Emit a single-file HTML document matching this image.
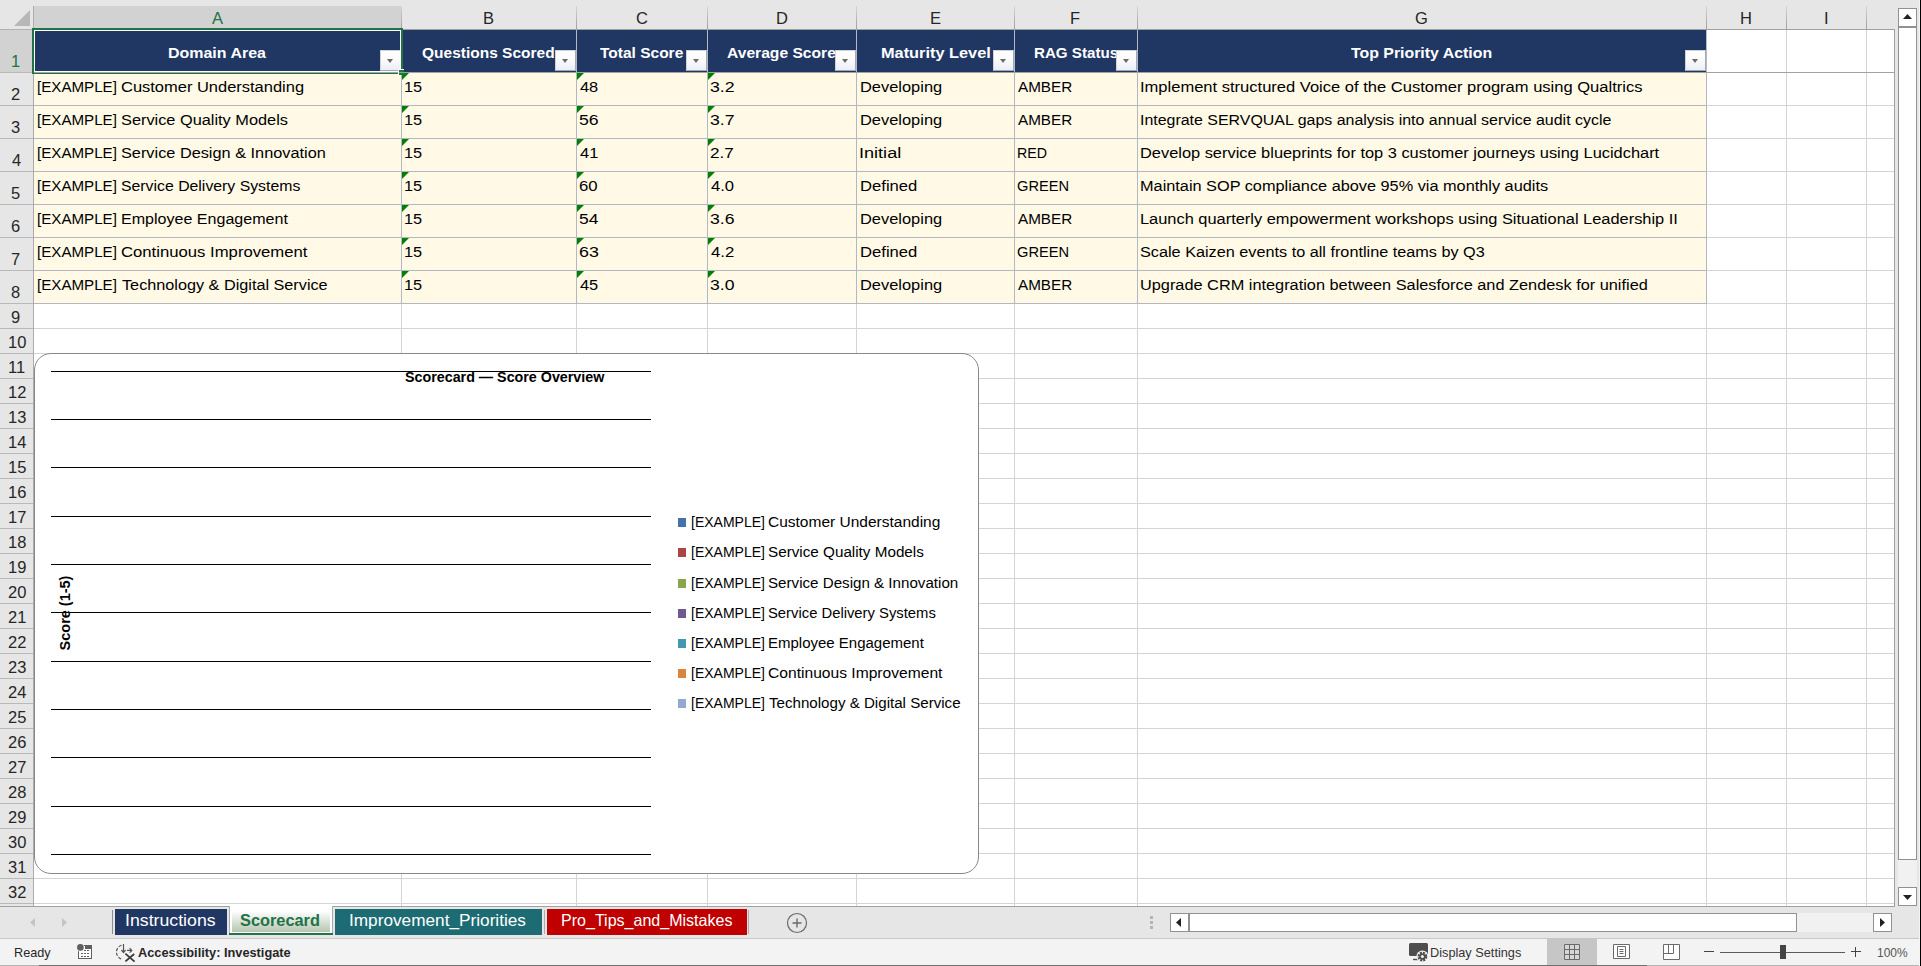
<!DOCTYPE html>
<html><head><meta charset="utf-8"><title>Scorecard</title><style>
html,body{margin:0;padding:0;}
body{width:1921px;height:966px;overflow:hidden;position:relative;background:#e6e6e6;font-family:"Liberation Sans",sans-serif;}
.b{position:absolute;}
.t{position:absolute;white-space:nowrap;transform-origin:0 50%;line-height:20px;}
.fb{width:21px;height:21px;background:linear-gradient(#fff,#fcfcfd 40%,#eceef5);border:1px solid #cfd2d8;border-right-color:#a2a8b4;border-bottom-color:#a2a8b4;box-sizing:border-box;}
.fb i{position:absolute;left:6px;top:8px;width:0;height:0;border-left:3.5px solid transparent;border-right:3.5px solid transparent;border-top:4px solid #6a6a6a;}
.tri{width:0;height:0;border-top:7px solid #008000;border-right:7px solid transparent;}
.sb{background:#fff;border:1px solid #919191;}
.sb2{background:#fff;border:1px solid #919191;}
</style></head><body>
<div class="b" style="left:34px;top:30px;width:1860px;height:876px;background:#fff;"></div>
<div class="b" style="left:34px;top:105px;width:1860px;height:1px;background:#d4d4d4;"></div>
<div class="b" style="left:34px;top:138px;width:1860px;height:1px;background:#d4d4d4;"></div>
<div class="b" style="left:34px;top:171px;width:1860px;height:1px;background:#d4d4d4;"></div>
<div class="b" style="left:34px;top:204px;width:1860px;height:1px;background:#d4d4d4;"></div>
<div class="b" style="left:34px;top:237px;width:1860px;height:1px;background:#d4d4d4;"></div>
<div class="b" style="left:34px;top:270px;width:1860px;height:1px;background:#d4d4d4;"></div>
<div class="b" style="left:34px;top:303px;width:1860px;height:1px;background:#d4d4d4;"></div>
<div class="b" style="left:34px;top:328px;width:1860px;height:1px;background:#d4d4d4;"></div>
<div class="b" style="left:34px;top:353px;width:1860px;height:1px;background:#d4d4d4;"></div>
<div class="b" style="left:34px;top:378px;width:1860px;height:1px;background:#d4d4d4;"></div>
<div class="b" style="left:34px;top:403px;width:1860px;height:1px;background:#d4d4d4;"></div>
<div class="b" style="left:34px;top:428px;width:1860px;height:1px;background:#d4d4d4;"></div>
<div class="b" style="left:34px;top:453px;width:1860px;height:1px;background:#d4d4d4;"></div>
<div class="b" style="left:34px;top:478px;width:1860px;height:1px;background:#d4d4d4;"></div>
<div class="b" style="left:34px;top:503px;width:1860px;height:1px;background:#d4d4d4;"></div>
<div class="b" style="left:34px;top:528px;width:1860px;height:1px;background:#d4d4d4;"></div>
<div class="b" style="left:34px;top:553px;width:1860px;height:1px;background:#d4d4d4;"></div>
<div class="b" style="left:34px;top:578px;width:1860px;height:1px;background:#d4d4d4;"></div>
<div class="b" style="left:34px;top:603px;width:1860px;height:1px;background:#d4d4d4;"></div>
<div class="b" style="left:34px;top:628px;width:1860px;height:1px;background:#d4d4d4;"></div>
<div class="b" style="left:34px;top:653px;width:1860px;height:1px;background:#d4d4d4;"></div>
<div class="b" style="left:34px;top:678px;width:1860px;height:1px;background:#d4d4d4;"></div>
<div class="b" style="left:34px;top:703px;width:1860px;height:1px;background:#d4d4d4;"></div>
<div class="b" style="left:34px;top:728px;width:1860px;height:1px;background:#d4d4d4;"></div>
<div class="b" style="left:34px;top:753px;width:1860px;height:1px;background:#d4d4d4;"></div>
<div class="b" style="left:34px;top:778px;width:1860px;height:1px;background:#d4d4d4;"></div>
<div class="b" style="left:34px;top:803px;width:1860px;height:1px;background:#d4d4d4;"></div>
<div class="b" style="left:34px;top:828px;width:1860px;height:1px;background:#d4d4d4;"></div>
<div class="b" style="left:34px;top:853px;width:1860px;height:1px;background:#d4d4d4;"></div>
<div class="b" style="left:34px;top:878px;width:1860px;height:1px;background:#d4d4d4;"></div>
<div class="b" style="left:34px;top:903px;width:1860px;height:1px;background:#d4d4d4;"></div>
<div class="b" style="left:401px;top:30px;width:1px;height:876px;background:#d4d4d4;"></div>
<div class="b" style="left:576px;top:30px;width:1px;height:876px;background:#d4d4d4;"></div>
<div class="b" style="left:707px;top:30px;width:1px;height:876px;background:#d4d4d4;"></div>
<div class="b" style="left:856px;top:30px;width:1px;height:876px;background:#d4d4d4;"></div>
<div class="b" style="left:1014px;top:30px;width:1px;height:876px;background:#d4d4d4;"></div>
<div class="b" style="left:1137px;top:30px;width:1px;height:876px;background:#d4d4d4;"></div>
<div class="b" style="left:1706px;top:30px;width:1px;height:876px;background:#d4d4d4;"></div>
<div class="b" style="left:1786px;top:30px;width:1px;height:876px;background:#d4d4d4;"></div>
<div class="b" style="left:1866px;top:30px;width:1px;height:876px;background:#d4d4d4;"></div>
<div class="b" style="left:34px;top:30px;width:1672px;height:42px;background:#203764;"></div>
<div class="b" style="left:34px;top:73px;width:1672px;height:230px;background:#fff9e6;"></div>
<div class="b" style="left:34px;top:105px;width:1673px;height:1px;background:#b1b8c4;"></div>
<div class="b" style="left:34px;top:138px;width:1673px;height:1px;background:#b1b8c4;"></div>
<div class="b" style="left:34px;top:171px;width:1673px;height:1px;background:#b1b8c4;"></div>
<div class="b" style="left:34px;top:204px;width:1673px;height:1px;background:#b1b8c4;"></div>
<div class="b" style="left:34px;top:237px;width:1673px;height:1px;background:#b1b8c4;"></div>
<div class="b" style="left:34px;top:270px;width:1673px;height:1px;background:#b1b8c4;"></div>
<div class="b" style="left:34px;top:303px;width:1673px;height:1px;background:#b1b8c4;"></div>
<div class="b" style="left:401px;top:73px;width:1px;height:231px;background:#b1b8c4;"></div>
<div class="b" style="left:576px;top:73px;width:1px;height:231px;background:#b1b8c4;"></div>
<div class="b" style="left:707px;top:73px;width:1px;height:231px;background:#b1b8c4;"></div>
<div class="b" style="left:856px;top:73px;width:1px;height:231px;background:#b1b8c4;"></div>
<div class="b" style="left:1014px;top:73px;width:1px;height:231px;background:#b1b8c4;"></div>
<div class="b" style="left:1137px;top:73px;width:1px;height:231px;background:#b1b8c4;"></div>
<div class="b" style="left:1706px;top:73px;width:1px;height:231px;background:#b1b8c4;"></div>
<div class="b" style="left:401px;top:30px;width:1px;height:42px;background:#b4b9c3;"></div>
<div class="b" style="left:576px;top:30px;width:1px;height:42px;background:#b4b9c3;"></div>
<div class="b" style="left:707px;top:30px;width:1px;height:42px;background:#b4b9c3;"></div>
<div class="b" style="left:856px;top:30px;width:1px;height:42px;background:#b4b9c3;"></div>
<div class="b" style="left:1014px;top:30px;width:1px;height:42px;background:#b4b9c3;"></div>
<div class="b" style="left:1137px;top:30px;width:1px;height:42px;background:#b4b9c3;"></div>
<div class="b" style="left:1706px;top:30px;width:1px;height:42px;background:#b4b9c3;"></div>
<span class="t" style="left:168px;top:43px;font-size:16px;color:#fff;font-weight:bold;transform:scale(0.9979,0.9600);transform-origin:0 15px;">Domain Area</span>
<span class="t" style="left:422px;top:43px;font-size:16px;color:#fff;font-weight:bold;transform:scale(0.9689,0.9600);transform-origin:0 15px;">Questions Scored</span>
<span class="t" style="left:600px;top:43px;font-size:16px;color:#fff;font-weight:bold;transform:scale(0.9686,0.9600);transform-origin:0 15px;">Total Score</span>
<span class="t" style="left:727px;top:43px;font-size:16px;color:#fff;font-weight:bold;transform:scale(0.9768,0.9600);transform-origin:0 15px;">Average Score</span>
<span class="t" style="left:881px;top:43px;font-size:16px;color:#fff;font-weight:bold;transform:scale(1.0205,0.9600);transform-origin:0 15px;">Maturity Level</span>
<span class="t" style="left:1034px;top:43px;font-size:16px;color:#fff;font-weight:bold;transform:scale(0.9464,0.9600);transform-origin:0 15px;">RAG Status</span>
<span class="t" style="left:1351px;top:43px;font-size:16px;color:#fff;font-weight:bold;transform:scale(0.9921,0.9600);transform-origin:0 15px;">Top Priority Action</span>
<div class="b fb" style="left:380px;top:50px;"><i></i></div>
<div class="b fb" style="left:555px;top:50px;"><i></i></div>
<div class="b fb" style="left:686px;top:50px;"><i></i></div>
<div class="b fb" style="left:835px;top:50px;"><i></i></div>
<div class="b fb" style="left:993px;top:50px;"><i></i></div>
<div class="b fb" style="left:1116px;top:50px;"><i></i></div>
<div class="b fb" style="left:1685px;top:50px;"><i></i></div>
<span class="t" style="left:37px;top:77px;font-size:16px;color:#000;transform:scale(0.9461,0.9600);transform-origin:0 15px;">[EXAMPLE]</span>
<span class="t" style="left:121px;top:77px;font-size:16px;color:#000;transform:scale(1.0291,0.9600);transform-origin:0 15px;">Customer Understanding</span>
<span class="t" style="left:404px;top:77px;font-size:16px;color:#000;transform:scale(1.0182,0.9600);transform-origin:0 15px;">15</span>
<span class="t" style="left:580px;top:77px;font-size:16px;color:#000;transform:scale(1.0243,0.9600);transform-origin:0 15px;">48</span>
<span class="t" style="left:710px;top:77px;font-size:16px;color:#000;transform:scale(1.1077,0.9600);transform-origin:0 15px;">3.2</span>
<span class="t" style="left:860px;top:77px;font-size:16px;color:#000;transform:scale(1.0263,0.9600);transform-origin:0 15px;">Developing</span>
<span class="t" style="left:1018px;top:77px;font-size:16px;color:#000;transform:scale(0.9531,0.9600);transform-origin:0 15px;">AMBER</span>
<span class="t" style="left:1140px;top:77px;font-size:16px;color:#000;transform:scale(1.0329,0.9600);transform-origin:0 15px;">Implement structured Voice of the Customer program using Qualtrics</span>
<div class="b tri" style="left:402px;top:73px;"></div>
<div class="b tri" style="left:577px;top:73px;"></div>
<div class="b tri" style="left:708px;top:73px;"></div>
<span class="t" style="left:37px;top:110px;font-size:16px;color:#000;transform:scale(0.9461,0.9600);transform-origin:0 15px;">[EXAMPLE]</span>
<span class="t" style="left:121px;top:110px;font-size:16px;color:#000;transform:scale(1.0202,0.9600);transform-origin:0 15px;">Service Quality Models</span>
<span class="t" style="left:404px;top:110px;font-size:16px;color:#000;transform:scale(1.0182,0.9600);transform-origin:0 15px;">15</span>
<span class="t" style="left:579px;top:110px;font-size:16px;color:#000;transform:scale(1.1057,0.9600);transform-origin:0 15px;">56</span>
<span class="t" style="left:710px;top:110px;font-size:16px;color:#000;transform:scale(1.1077,0.9600);transform-origin:0 15px;">3.7</span>
<span class="t" style="left:860px;top:110px;font-size:16px;color:#000;transform:scale(1.0263,0.9600);transform-origin:0 15px;">Developing</span>
<span class="t" style="left:1018px;top:110px;font-size:16px;color:#000;transform:scale(0.9531,0.9600);transform-origin:0 15px;">AMBER</span>
<span class="t" style="left:1140px;top:110px;font-size:16px;color:#000;transform:scale(0.9961,0.9600);transform-origin:0 15px;">Integrate SERVQUAL gaps analysis into annual service audit cycle</span>
<div class="b tri" style="left:402px;top:106px;"></div>
<div class="b tri" style="left:577px;top:106px;"></div>
<div class="b tri" style="left:708px;top:106px;"></div>
<span class="t" style="left:37px;top:143px;font-size:16px;color:#000;transform:scale(0.9461,0.9600);transform-origin:0 15px;">[EXAMPLE]</span>
<span class="t" style="left:121px;top:143px;font-size:16px;color:#000;transform:scale(1.0187,0.9600);transform-origin:0 15px;">Service Design &amp; Innovation</span>
<span class="t" style="left:404px;top:143px;font-size:16px;color:#000;transform:scale(1.0182,0.9600);transform-origin:0 15px;">15</span>
<span class="t" style="left:580px;top:143px;font-size:16px;color:#000;transform:scale(1.0292,0.9600);transform-origin:0 15px;">41</span>
<span class="t" style="left:710px;top:143px;font-size:16px;color:#000;transform:scale(1.0718,0.9600);transform-origin:0 15px;">2.7</span>
<span class="t" style="left:859px;top:143px;font-size:16px;color:#000;transform:scale(1.1297,0.9600);transform-origin:0 15px;">Initial</span>
<span class="t" style="left:1017px;top:143px;font-size:16px;color:#000;transform:scale(0.8881,0.9600);transform-origin:0 15px;">RED</span>
<span class="t" style="left:1140px;top:143px;font-size:16px;color:#000;transform:scale(1.0241,0.9600);transform-origin:0 15px;">Develop service blueprints for top 3 customer journeys using Lucidchart</span>
<div class="b tri" style="left:402px;top:139px;"></div>
<div class="b tri" style="left:577px;top:139px;"></div>
<div class="b tri" style="left:708px;top:139px;"></div>
<span class="t" style="left:37px;top:176px;font-size:16px;color:#000;transform:scale(0.9461,0.9600);transform-origin:0 15px;">[EXAMPLE]</span>
<span class="t" style="left:121px;top:176px;font-size:16px;color:#000;transform:scale(0.9885,0.9600);transform-origin:0 15px;">Service Delivery Systems</span>
<span class="t" style="left:404px;top:176px;font-size:16px;color:#000;transform:scale(1.0182,0.9600);transform-origin:0 15px;">15</span>
<span class="t" style="left:579px;top:176px;font-size:16px;color:#000;transform:scale(1.0493,0.9600);transform-origin:0 15px;">60</span>
<span class="t" style="left:711px;top:176px;font-size:16px;color:#000;transform:scale(1.0397,0.9600);transform-origin:0 15px;">4.0</span>
<span class="t" style="left:860px;top:176px;font-size:16px;color:#000;transform:scale(1.0402,0.9600);transform-origin:0 15px;">Defined</span>
<span class="t" style="left:1017px;top:176px;font-size:16px;color:#000;transform:scale(0.9147,0.9600);transform-origin:0 15px;">GREEN</span>
<span class="t" style="left:1140px;top:176px;font-size:16px;color:#000;transform:scale(1.0181,0.9600);transform-origin:0 15px;">Maintain SOP compliance above 95% via monthly audits</span>
<div class="b tri" style="left:402px;top:172px;"></div>
<div class="b tri" style="left:577px;top:172px;"></div>
<div class="b tri" style="left:708px;top:172px;"></div>
<span class="t" style="left:37px;top:209px;font-size:16px;color:#000;transform:scale(0.9461,0.9600);transform-origin:0 15px;">[EXAMPLE]</span>
<span class="t" style="left:121px;top:209px;font-size:16px;color:#000;transform:scale(1.0034,0.9600);transform-origin:0 15px;">Employee Engagement</span>
<span class="t" style="left:404px;top:209px;font-size:16px;color:#000;transform:scale(1.0182,0.9600);transform-origin:0 15px;">15</span>
<span class="t" style="left:579px;top:209px;font-size:16px;color:#000;transform:scale(1.0898,0.9600);transform-origin:0 15px;">54</span>
<span class="t" style="left:710px;top:209px;font-size:16px;color:#000;transform:scale(1.1034,0.9600);transform-origin:0 15px;">3.6</span>
<span class="t" style="left:860px;top:209px;font-size:16px;color:#000;transform:scale(1.0263,0.9600);transform-origin:0 15px;">Developing</span>
<span class="t" style="left:1018px;top:209px;font-size:16px;color:#000;transform:scale(0.9531,0.9600);transform-origin:0 15px;">AMBER</span>
<span class="t" style="left:1140px;top:209px;font-size:16px;color:#000;transform:scale(1.0251,0.9600);transform-origin:0 15px;">Launch quarterly empowerment workshops using Situational Leadership II</span>
<div class="b tri" style="left:402px;top:205px;"></div>
<div class="b tri" style="left:577px;top:205px;"></div>
<div class="b tri" style="left:708px;top:205px;"></div>
<span class="t" style="left:37px;top:242px;font-size:16px;color:#000;transform:scale(0.9461,0.9600);transform-origin:0 15px;">[EXAMPLE]</span>
<span class="t" style="left:121px;top:242px;font-size:16px;color:#000;transform:scale(1.0432,0.9600);transform-origin:0 15px;">Continuous Improvement</span>
<span class="t" style="left:404px;top:242px;font-size:16px;color:#000;transform:scale(1.0182,0.9600);transform-origin:0 15px;">15</span>
<span class="t" style="left:579px;top:242px;font-size:16px;color:#000;transform:scale(1.1165,0.9600);transform-origin:0 15px;">63</span>
<span class="t" style="left:711px;top:242px;font-size:16px;color:#000;transform:scale(1.0475,0.9600);transform-origin:0 15px;">4.2</span>
<span class="t" style="left:860px;top:242px;font-size:16px;color:#000;transform:scale(1.0402,0.9600);transform-origin:0 15px;">Defined</span>
<span class="t" style="left:1017px;top:242px;font-size:16px;color:#000;transform:scale(0.9147,0.9600);transform-origin:0 15px;">GREEN</span>
<span class="t" style="left:1140px;top:242px;font-size:16px;color:#000;transform:scale(1.0148,0.9600);transform-origin:0 15px;">Scale Kaizen events to all frontline teams by Q3</span>
<div class="b tri" style="left:402px;top:238px;"></div>
<div class="b tri" style="left:577px;top:238px;"></div>
<div class="b tri" style="left:708px;top:238px;"></div>
<span class="t" style="left:37px;top:275px;font-size:16px;color:#000;transform:scale(0.9461,0.9600);transform-origin:0 15px;">[EXAMPLE]</span>
<span class="t" style="left:122px;top:275px;font-size:16px;color:#000;transform:scale(1.0141,0.9600);transform-origin:0 15px;">Technology &amp; Digital Service</span>
<span class="t" style="left:404px;top:275px;font-size:16px;color:#000;transform:scale(1.0182,0.9600);transform-origin:0 15px;">15</span>
<span class="t" style="left:580px;top:275px;font-size:16px;color:#000;transform:scale(1.0243,0.9600);transform-origin:0 15px;">45</span>
<span class="t" style="left:710px;top:275px;font-size:16px;color:#000;transform:scale(1.0993,0.9600);transform-origin:0 15px;">3.0</span>
<span class="t" style="left:860px;top:275px;font-size:16px;color:#000;transform:scale(1.0263,0.9600);transform-origin:0 15px;">Developing</span>
<span class="t" style="left:1018px;top:275px;font-size:16px;color:#000;transform:scale(0.9531,0.9600);transform-origin:0 15px;">AMBER</span>
<span class="t" style="left:1140px;top:275px;font-size:16px;color:#000;transform:scale(1.0195,0.9600);transform-origin:0 15px;">Upgrade CRM integration between Salesforce and Zendesk for unified</span>
<div class="b tri" style="left:402px;top:271px;"></div>
<div class="b tri" style="left:577px;top:271px;"></div>
<div class="b tri" style="left:708px;top:271px;"></div>
<div class="b" style="left:0px;top:0px;width:1921px;height:30px;background:#e6e6e6;"></div>
<div class="b" style="left:34px;top:6px;width:367px;height:23px;background:#d2d2d2;"></div>
<div class="b" style="left:401px;top:6px;width:1px;height:23px;background:linear-gradient(#d6d6d6,#9e9e9e);"></div>
<div class="b" style="left:576px;top:6px;width:1px;height:23px;background:linear-gradient(#d6d6d6,#9e9e9e);"></div>
<div class="b" style="left:707px;top:6px;width:1px;height:23px;background:linear-gradient(#d6d6d6,#9e9e9e);"></div>
<div class="b" style="left:856px;top:6px;width:1px;height:23px;background:linear-gradient(#d6d6d6,#9e9e9e);"></div>
<div class="b" style="left:1014px;top:6px;width:1px;height:23px;background:linear-gradient(#d6d6d6,#9e9e9e);"></div>
<div class="b" style="left:1137px;top:6px;width:1px;height:23px;background:linear-gradient(#d6d6d6,#9e9e9e);"></div>
<div class="b" style="left:1706px;top:6px;width:1px;height:23px;background:linear-gradient(#d6d6d6,#9e9e9e);"></div>
<div class="b" style="left:1786px;top:6px;width:1px;height:23px;background:linear-gradient(#d6d6d6,#9e9e9e);"></div>
<div class="b" style="left:1866px;top:6px;width:1px;height:23px;background:linear-gradient(#d6d6d6,#9e9e9e);"></div>
<div class="b" style="left:33px;top:6px;width:1px;height:23px;background:#adadad;"></div>
<div class="b" style="left:0px;top:29px;width:1895px;height:1px;background:#a0a0a0;"></div>
<div class="b" style="left:0px;top:29px;width:32px;height:1px;background:#b2b2b2;"></div>
<span class="t" style="left:212px;top:8px;font-size:16.5px;color:#217346;">A</span>
<span class="t" style="left:483px;top:8px;font-size:16.5px;color:#262626;">B</span>
<span class="t" style="left:636px;top:8px;font-size:16.5px;color:#262626;">C</span>
<span class="t" style="left:776px;top:8px;font-size:16.5px;color:#262626;">D</span>
<span class="t" style="left:930px;top:8px;font-size:16.5px;color:#262626;">E</span>
<span class="t" style="left:1070px;top:8px;font-size:16.5px;color:#262626;">F</span>
<span class="t" style="left:1415px;top:8px;font-size:16.5px;color:#262626;">G</span>
<span class="t" style="left:1740px;top:8px;font-size:16.5px;color:#262626;">H</span>
<span class="t" style="left:1824px;top:8px;font-size:16.5px;color:#262626;">I</span>
<svg class="b" style="left:14px;top:10px" width="16" height="16"><path d="M16 0V16H0Z" fill="#b7b7b7"/></svg>
<div class="b" style="left:0px;top:30px;width:33px;height:876px;background:#e6e6e6;"></div>
<div class="b" style="left:0px;top:30px;width:32px;height:42px;background:#d2d2d2;"></div>
<div class="b" style="left:33px;top:30px;width:1px;height:876px;background:#ababab;"></div>
<div class="b" style="left:0px;top:72px;width:33px;height:1px;background:#b9b9b9;"></div>
<div class="b" style="left:0px;top:105px;width:33px;height:1px;background:#b9b9b9;"></div>
<div class="b" style="left:0px;top:138px;width:33px;height:1px;background:#b9b9b9;"></div>
<div class="b" style="left:0px;top:171px;width:33px;height:1px;background:#b9b9b9;"></div>
<div class="b" style="left:0px;top:204px;width:33px;height:1px;background:#b9b9b9;"></div>
<div class="b" style="left:0px;top:237px;width:33px;height:1px;background:#b9b9b9;"></div>
<div class="b" style="left:0px;top:270px;width:33px;height:1px;background:#b9b9b9;"></div>
<div class="b" style="left:0px;top:303px;width:33px;height:1px;background:#b9b9b9;"></div>
<div class="b" style="left:0px;top:328px;width:33px;height:1px;background:#b9b9b9;"></div>
<div class="b" style="left:0px;top:353px;width:33px;height:1px;background:#b9b9b9;"></div>
<div class="b" style="left:0px;top:378px;width:33px;height:1px;background:#b9b9b9;"></div>
<div class="b" style="left:0px;top:403px;width:33px;height:1px;background:#b9b9b9;"></div>
<div class="b" style="left:0px;top:428px;width:33px;height:1px;background:#b9b9b9;"></div>
<div class="b" style="left:0px;top:453px;width:33px;height:1px;background:#b9b9b9;"></div>
<div class="b" style="left:0px;top:478px;width:33px;height:1px;background:#b9b9b9;"></div>
<div class="b" style="left:0px;top:503px;width:33px;height:1px;background:#b9b9b9;"></div>
<div class="b" style="left:0px;top:528px;width:33px;height:1px;background:#b9b9b9;"></div>
<div class="b" style="left:0px;top:553px;width:33px;height:1px;background:#b9b9b9;"></div>
<div class="b" style="left:0px;top:578px;width:33px;height:1px;background:#b9b9b9;"></div>
<div class="b" style="left:0px;top:603px;width:33px;height:1px;background:#b9b9b9;"></div>
<div class="b" style="left:0px;top:628px;width:33px;height:1px;background:#b9b9b9;"></div>
<div class="b" style="left:0px;top:653px;width:33px;height:1px;background:#b9b9b9;"></div>
<div class="b" style="left:0px;top:678px;width:33px;height:1px;background:#b9b9b9;"></div>
<div class="b" style="left:0px;top:703px;width:33px;height:1px;background:#b9b9b9;"></div>
<div class="b" style="left:0px;top:728px;width:33px;height:1px;background:#b9b9b9;"></div>
<div class="b" style="left:0px;top:753px;width:33px;height:1px;background:#b9b9b9;"></div>
<div class="b" style="left:0px;top:778px;width:33px;height:1px;background:#b9b9b9;"></div>
<div class="b" style="left:0px;top:803px;width:33px;height:1px;background:#b9b9b9;"></div>
<div class="b" style="left:0px;top:828px;width:33px;height:1px;background:#b9b9b9;"></div>
<div class="b" style="left:0px;top:853px;width:33px;height:1px;background:#b9b9b9;"></div>
<div class="b" style="left:0px;top:878px;width:33px;height:1px;background:#b9b9b9;"></div>
<div class="b" style="left:0px;top:903px;width:33px;height:1px;background:#b9b9b9;"></div>
<span class="t" style="left:11px;top:51px;font-size:16.5px;color:#217346;">1</span>
<span class="t" style="left:11px;top:84px;font-size:16.5px;color:#262626;">2</span>
<span class="t" style="left:11px;top:117px;font-size:16.5px;color:#262626;">3</span>
<span class="t" style="left:12px;top:150px;font-size:16.5px;color:#262626;">4</span>
<span class="t" style="left:11px;top:183px;font-size:16.5px;color:#262626;">5</span>
<span class="t" style="left:11px;top:216px;font-size:16.5px;color:#262626;">6</span>
<span class="t" style="left:11px;top:249px;font-size:16.5px;color:#262626;">7</span>
<span class="t" style="left:11px;top:282px;font-size:16.5px;color:#262626;">8</span>
<span class="t" style="left:11px;top:307px;font-size:16.5px;color:#262626;">9</span>
<span class="t" style="left:8px;top:332px;font-size:16.5px;color:#262626;">10</span>
<span class="t" style="left:8px;top:357px;font-size:16.5px;color:#262626;">11</span>
<span class="t" style="left:8px;top:382px;font-size:16.5px;color:#262626;">12</span>
<span class="t" style="left:8px;top:407px;font-size:16.5px;color:#262626;">13</span>
<span class="t" style="left:8px;top:432px;font-size:16.5px;color:#262626;">14</span>
<span class="t" style="left:8px;top:457px;font-size:16.5px;color:#262626;">15</span>
<span class="t" style="left:8px;top:482px;font-size:16.5px;color:#262626;">16</span>
<span class="t" style="left:8px;top:507px;font-size:16.5px;color:#262626;">17</span>
<span class="t" style="left:8px;top:532px;font-size:16.5px;color:#262626;">18</span>
<span class="t" style="left:8px;top:557px;font-size:16.5px;color:#262626;">19</span>
<span class="t" style="left:8px;top:582px;font-size:16.5px;color:#262626;">20</span>
<span class="t" style="left:8px;top:607px;font-size:16.5px;color:#262626;">21</span>
<span class="t" style="left:8px;top:632px;font-size:16.5px;color:#262626;">22</span>
<span class="t" style="left:8px;top:657px;font-size:16.5px;color:#262626;">23</span>
<span class="t" style="left:8px;top:682px;font-size:16.5px;color:#262626;">24</span>
<span class="t" style="left:8px;top:707px;font-size:16.5px;color:#262626;">25</span>
<span class="t" style="left:8px;top:732px;font-size:16.5px;color:#262626;">26</span>
<span class="t" style="left:8px;top:757px;font-size:16.5px;color:#262626;">27</span>
<span class="t" style="left:8px;top:782px;font-size:16.5px;color:#262626;">28</span>
<span class="t" style="left:8px;top:807px;font-size:16.5px;color:#262626;">29</span>
<span class="t" style="left:8px;top:832px;font-size:16.5px;color:#262626;">30</span>
<span class="t" style="left:8px;top:857px;font-size:16.5px;color:#262626;">31</span>
<span class="t" style="left:8px;top:882px;font-size:16.5px;color:#262626;">32</span>
<div class="b" style="left:32px;top:28px;width:367px;height:42px;border:2px solid #217346;box-shadow:inset 0 0 0 1px #fff;"></div>
<div class="b" style="left:34px;top:72px;width:1860px;height:1px;background:#a3a3a3;"></div>
<div class="b" style="left:398px;top:69px;width:6px;height:6px;background:#fff;"></div>
<div class="b" style="left:399px;top:70px;width:5px;height:5px;background:#217346;"></div>
<div class="b" style="left:399px;top:72px;width:5px;height:1px;background:#8aa396;"></div>
<div class="b" style="left:1894px;top:29px;width:1px;height:878px;background:#a0a0a0;"></div>
<div class="b" style="left:0px;top:906px;width:1895px;height:1px;background:#a0a0a0;"></div>
<div class="b" style="left:34px;top:353px;width:943px;height:519px;border:1px solid #888;border-radius:17px;background:#fff;"></div>
<div class="b" style="left:51px;top:371px;width:600px;height:1px;background:#000;"></div>
<div class="b" style="left:51px;top:419px;width:600px;height:1px;background:#000;"></div>
<div class="b" style="left:51px;top:467px;width:600px;height:1px;background:#000;"></div>
<div class="b" style="left:51px;top:516px;width:600px;height:1px;background:#000;"></div>
<div class="b" style="left:51px;top:564px;width:600px;height:1px;background:#000;"></div>
<div class="b" style="left:51px;top:612px;width:600px;height:1px;background:#000;"></div>
<div class="b" style="left:51px;top:661px;width:600px;height:1px;background:#000;"></div>
<div class="b" style="left:51px;top:709px;width:600px;height:1px;background:#000;"></div>
<div class="b" style="left:51px;top:757px;width:600px;height:1px;background:#000;"></div>
<div class="b" style="left:51px;top:806px;width:600px;height:1px;background:#000;"></div>
<div class="b" style="left:51px;top:854px;width:600px;height:1px;background:#000;"></div>
<span class="t" style="left:405px;top:367px;font-size:14px;color:#000;font-weight:bold;transform:scaleX(1.0204);">Scorecard — Score Overview</span>
<span class="t" style="left:64.5px;top:613px;font-size:14px;font-weight:bold;transform:translate(-50%,-50%) rotate(-90deg) scaleX(1.035);transform-origin:center;">Score (1-5)</span>
<div class="b" style="left:678px;top:518px;width:8px;height:9px;background:#4572a7;"></div>
<span class="t" style="left:691px;top:512px;font-size:14px;color:#000;">[EXAMPLE]</span>
<span class="t" style="left:768px;top:512px;font-size:14px;color:#000;transform:scaleX(1.1073);">Customer Understanding</span>
<div class="b" style="left:678px;top:548px;width:8px;height:9px;background:#aa4643;"></div>
<span class="t" style="left:691px;top:542px;font-size:14px;color:#000;">[EXAMPLE]</span>
<span class="t" style="left:768px;top:542px;font-size:14px;color:#000;transform:scaleX(1.0885);">Service Quality Models</span>
<div class="b" style="left:678px;top:579px;width:8px;height:9px;background:#89a54e;"></div>
<span class="t" style="left:691px;top:573px;font-size:14px;color:#000;">[EXAMPLE]</span>
<span class="t" style="left:768px;top:573px;font-size:14px;color:#000;transform:scaleX(1.0816);">Service Design &amp; Innovation</span>
<div class="b" style="left:678px;top:609px;width:8px;height:9px;background:#71588f;"></div>
<span class="t" style="left:691px;top:603px;font-size:14px;color:#000;">[EXAMPLE]</span>
<span class="t" style="left:768px;top:603px;font-size:14px;color:#000;transform:scaleX(1.0573);">Service Delivery Systems</span>
<div class="b" style="left:678px;top:639px;width:8px;height:9px;background:#4198af;"></div>
<span class="t" style="left:691px;top:633px;font-size:14px;color:#000;">[EXAMPLE]</span>
<span class="t" style="left:768px;top:633px;font-size:14px;color:#000;transform:scaleX(1.0706);">Employee Engagement</span>
<div class="b" style="left:678px;top:669px;width:8px;height:9px;background:#db843d;"></div>
<span class="t" style="left:691px;top:663px;font-size:14px;color:#000;">[EXAMPLE]</span>
<span class="t" style="left:768px;top:663px;font-size:14px;color:#000;transform:scaleX(1.1151);">Continuous Improvement</span>
<div class="b" style="left:678px;top:699px;width:8px;height:9px;background:#93a9cf;"></div>
<span class="t" style="left:691px;top:693px;font-size:14px;color:#000;">[EXAMPLE]</span>
<span class="t" style="left:769px;top:693px;font-size:14px;color:#000;transform:scaleX(1.0797);">Technology &amp; Digital Service</span>
<div class="b" style="left:1895px;top:0px;width:26px;height:938px;background:#e6e6e6;"></div>
<div class="b sb" style="left:1898px;top:8px;width:17px;height:17px;"></div>
<svg class="b" style="left:1903px;top:14px" width="9" height="5"><path d="M0 5L4.5 0L9 5Z" fill="#222"/></svg>
<div class="b" style="left:1898px;top:860px;width:19px;height:27px;background:#f1f1f1;"></div>
<div class="b sb" style="left:1898px;top:27px;width:17px;height:831px;"></div>
<div class="b sb" style="left:1898px;top:887px;width:17px;height:17px;"></div>
<svg class="b" style="left:1903px;top:895px" width="9" height="5"><path d="M0 0L4.5 5L9 0Z" fill="#222"/></svg>
<div class="b" style="left:0px;top:907px;width:1920px;height:31px;background:#e6e6e6;"></div>
<svg class="b" style="left:30px;top:918px" width="5" height="9"><path d="M5 0L0 4.5L5 9Z" fill="#c4c4c4"/></svg>
<svg class="b" style="left:62px;top:918px" width="5" height="9"><path d="M0 0L5 4.5L0 9Z" fill="#c4c4c4"/></svg>
<div class="b" style="left:112px;top:910px;width:1px;height:24px;background:#8c8c8c;"></div>
<div class="b" style="left:115px;top:909px;width:112px;height:26px;background:#203764;"></div>
<span class="t" style="left:125px;top:910px;font-size:16.5px;color:#fff;transform:scaleX(1.0737);">Instructions</span>
<div class="b" style="left:229px;top:906px;width:104px;height:29px;background:#fff;border-left:1px solid #ababab;border-right:1px solid #ababab;box-sizing:border-box;"></div>
<div class="b" style="left:232px;top:908px;width:98px;height:24px;background:linear-gradient(#fff 12%,#b6c5b2);"></div>
<div class="b" style="left:229px;top:933px;width:104px;height:2px;background:#217346;"></div>
<span class="t" style="left:240px;top:910px;font-size:16.5px;color:#217346;font-weight:bold;transform:scaleX(0.9899);">Scorecard</span>
<div class="b" style="left:335px;top:909px;width:207px;height:26px;background:#1d6b73;"></div>
<span class="t" style="left:349px;top:910px;font-size:16.5px;color:#fff;transform:scaleX(1.0432);">Improvement_Priorities</span>
<div class="b" style="left:544px;top:910px;width:1px;height:24px;background:#ababab;"></div>
<div class="b" style="left:547px;top:909px;width:200px;height:26px;background:#c00000;"></div>
<span class="t" style="left:561px;top:910px;font-size:16.5px;color:#fff;transform:scaleX(0.9720);">Pro_Tips_and_Mistakes</span>
<div class="b" style="left:748px;top:910px;width:1px;height:24px;background:#ababab;"></div>
<svg class="b" style="left:786px;top:912px" width="22" height="22"><circle cx="11" cy="11" r="9.5" fill="none" stroke="#6a6a6a" stroke-width="1.2"/><path d="M11 6.5V15.5M6.5 11H15.5" stroke="#6a6a6a" stroke-width="1.4"/></svg>
<div class="b" style="left:1150px;top:916px;width:3px;height:3px;background:#b4b4b4;"></div>
<div class="b" style="left:1150px;top:921px;width:3px;height:3px;background:#b4b4b4;"></div>
<div class="b" style="left:1150px;top:926px;width:3px;height:3px;background:#b4b4b4;"></div>
<div class="b" style="left:1797px;top:913px;width:76px;height:19px;background:#f1f1f1;"></div>
<div class="b sb2" style="left:1170px;top:913px;width:17px;height:17px;"></div>
<svg class="b" style="left:1176px;top:918px" width="5" height="9"><path d="M5 0L0 4.5L5 9Z" fill="#222"/></svg>
<div class="b sb2" style="left:1189px;top:913px;width:606px;height:17px;"></div>
<div class="b sb2" style="left:1873px;top:913px;width:17px;height:17px;"></div>
<svg class="b" style="left:1880px;top:918px" width="5" height="9"><path d="M0 0L5 4.5L0 9Z" fill="#222"/></svg>
<div class="b" style="left:0px;top:938px;width:1920px;height:28px;background:#f3f3f3;"></div>
<div class="b" style="left:0px;top:938px;width:1920px;height:1px;background:#c8c8c8;"></div>
<span class="t" style="left:14px;top:943px;font-size:13.5px;color:#262626;transform:scaleX(0.9385);">Ready</span>
<span class="t" style="left:138px;top:943px;font-size:13.5px;color:#262626;font-weight:bold;transform:scaleX(0.9466);">Accessibility: Investigate</span>
<span class="t" style="left:1430px;top:943px;font-size:13.5px;color:#333;transform:scaleX(0.9429);">Display Settings</span>
<span class="t" style="left:1877px;top:943px;font-size:13.5px;color:#555;transform:scaleX(0.8890);">100%</span>
<svg class="b" style="left:76px;top:942px" width="18" height="18"><rect x="2.5" y="3.5" width="13" height="13" fill="#fff" stroke="#5f5f5f"/><rect x="9" y="3" width="7" height="4" fill="#5f5f5f"/><path d="M5 8.5h2M8 8.5h2M11 8.5h2M5 11.5h2M8 11.5h2M11 11.5h2M5 14.5h2M8 14.5h2M11 14.5h2" stroke="#5f5f5f" stroke-width="1"/><circle cx="4.4" cy="5.4" r="3.9" fill="#f3f3f3"/><circle cx="4.4" cy="5.4" r="3.3" fill="#5f5f5f"/></svg>
<svg class="b" style="left:114px;top:942px" width="24" height="22"><path d="M7.5 3.2A7.3 7.3 0 0 0 8.4 17.3" fill="none" stroke="#555" stroke-width="1.2" stroke-dasharray="3.2 1.6"/><path d="M9.5 2V10M7.4 8L9.5 10.6L11.6 8" fill="none" stroke="#555" stroke-width="1.2"/><path d="M13 8.4H17.5M15.6 6.2L17.8 8.4L15.6 10.6" fill="none" stroke="#555" stroke-width="1.2"/><path d="M11.4 11.6L20.6 19.6M20.2 12L11.4 19.4" stroke="#3a3a3a" stroke-width="1.8"/></svg>
<svg class="b" style="left:1408px;top:941px" width="24" height="24"><rect x="1" y="2" width="19" height="13" rx="1.5" fill="#4d4d4d"/><path d="M5 18.5H10" stroke="#4d4d4d" stroke-width="1.4"/><circle cx="14.4" cy="15.6" r="6" fill="#f3f3f3"/><circle cx="14.4" cy="15.6" r="3.6" fill="none" stroke="#4d4d4d" stroke-width="2.6" stroke-dasharray="1.9 0.93"/><circle cx="14.4" cy="15.6" r="3.2" fill="#4d4d4d"/><circle cx="14.4" cy="15.6" r="1.5" fill="#f3f3f3"/></svg>
<div class="b" style="left:1547px;top:938px;width:50px;height:27px;background:#c6c6c6;"></div>
<svg class="b" style="left:1564px;top:944px" width="16" height="16"><rect x="0" y="0" width="16" height="16" fill="#d6d6d6"/><path d="M0.5 0.5H15.5V15.5H0.5ZM0.5 5.5H15.5M0.5 10.5H15.5M5.5 0.5V15.5M10.5 0.5V15.5" fill="none" stroke="#6a6a6a"/></svg>
<svg class="b" style="left:1613px;top:944px" width="17" height="15"><path d="M0.5 0.5H16.5V14.5H0.5Z" fill="#fff" stroke="#6a6a6a"/><path d="M4.5 2.5H12.5V12.5H4.5Z" fill="none" stroke="#6a6a6a"/><path d="M6.5 5.5H10.5M6.5 7.5H10.5M6.5 9.5H10.5" fill="none" stroke="#6a6a6a"/></svg>
<svg class="b" style="left:1663px;top:944px" width="17" height="16"><path d="M0.5 0.5H16.5V15.5H0.5Z" fill="#fff" stroke="#6a6a6a"/><path d="M5.5 0.5V9.5M10.5 0.5V9.5H0.5" fill="none" stroke="#6a6a6a"/></svg>
<div class="b" style="left:1704px;top:951px;width:10px;height:1px;background:#444;"></div>
<div class="b" style="left:1720px;top:952px;width:125px;height:1px;background:#5a5a5a;"></div>
<div class="b" style="left:1780px;top:945px;width:6px;height:14px;background:#444;"></div>
<div class="b" style="left:1851px;top:951px;width:10px;height:1px;background:#444;"></div>
<div class="b" style="left:1855px;top:947px;width:1px;height:10px;background:#444;"></div>
<div class="b" style="left:0px;top:965px;width:1921px;height:1px;background:#b4b4b4;"></div>
<div class="b" style="left:39px;top:965px;width:1608px;height:1px;background:#707070;"></div>
<div class="b" style="left:1919px;top:0px;width:1px;height:966px;background:#f4f4f4;"></div>
<div class="b" style="left:1920px;top:0px;width:1px;height:966px;background:#000;"></div>
</body></html>
